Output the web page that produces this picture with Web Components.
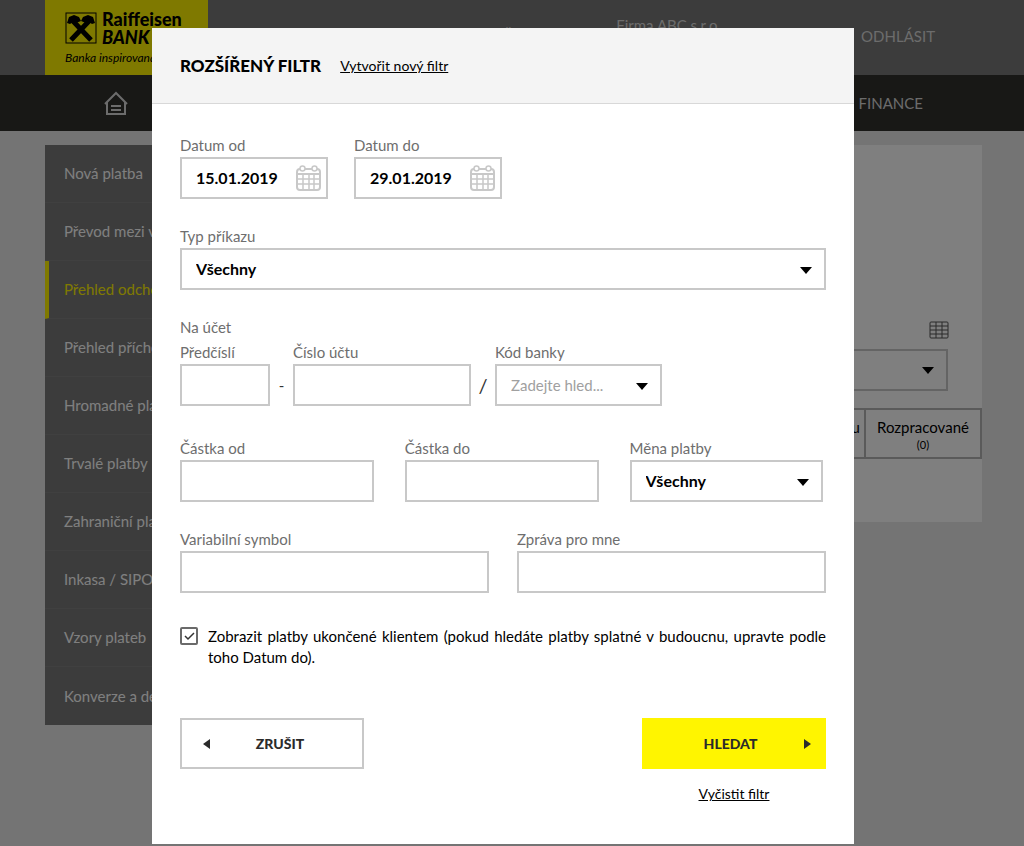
<!DOCTYPE html>
<html lang="cs">
<head>
<meta charset="utf-8">
<meta name="viewport" content="width=device-width, initial-scale=1">
<title>Rozšířený filtr</title>
<style>
  html, body { margin: 0; }
  body { font: 15px/21px Lato, "Liberation Sans", sans-serif; color: #000; background: #e8e8e8; }
</style>
</head>
<body>
<rb-app>
  <rb-page slot="page"></rb-page>
  <rb-dialog slot="dialog" heading="ROZŠÍŘENÝ FILTR">
    <a slot="action" href="#new" style="color:#000;font-size:14px">Vytvořit nový filtr</a>
    <rb-filter-form></rb-filter-form>
  </rb-dialog>
</rb-app>

<script>
const define = (name, html, setup) => customElements.define(name, class extends HTMLElement {
  constructor() {
    super();
    this.attachShadow({ mode: 'open' });
  }
  connectedCallback() {
    if (this.shadowRoot.childNodes.length) return;
    const t = document.createElement('template');
    t.innerHTML = '<style>*{box-sizing:border-box}</style>' + html;
    this.shadowRoot.append(t.content.cloneNode(true));
    if (setup) setup(this, this.shadowRoot);
  }
});

/* Page and overlay share one grid cell */
define('rb-app', `
<style>
  :host { display: grid; grid-template-columns: minmax(0, 1fr); min-height: 100vh; }
  ::slotted(*), .shade { grid-area: 1 / 1; }
  .shade { background: rgba(0,0,0,.5); padding: 28px 18px 2px 0; display: flex; justify-content: center; align-items: flex-start; z-index: 1; }
</style>
<slot name="page"></slot>
<div class="shade"><slot name="dialog"></slot></div>`);

define('rb-logo', `
<style>
  :host { display: block; width: 163px; height: 75px; background: #fff200; padding: 12px 0 0 20px; color: #000; white-space: nowrap; overflow: hidden; }
  .top { display: flex; gap: 5px; height: 32px; }
  svg { width: 32px; height: 32px; flex: none; }
  .name { font-weight: 900; font-size: 18px; line-height: 17px; margin-top: -1px; }
  i { display: block; line-height: 19px; }
  em { display: block; font-size: 12px; line-height: 14px; margin-top: 7px; }
</style>
<div class="top">
  <svg viewBox="0 0 32 32"><rect x="1" y="1" width="30" height="30" fill="none" stroke="#000"/>
    <path d="M6 28 25 8M26 28 7 8" stroke="#000" stroke-width="5"/>
    <path d="M2 11 4 5 9 3 14 5 16 9 11 11 8 10 5 12ZM30 11 28 5 23 3 18 5 16 9 21 11 24 10 27 12Z"/></svg>
  <div class="name">Raiffeisen<i>BANK</i></div>
</div>
<em>Banka inspirovaná</em>`);

define('rb-header', `
<style>
  :host { display: block; color: #fff; font-size: 15px; }
  header { background: #787878; height: 75px; padding: 0 89px 0 45px; display: flex; justify-content: space-between; }
  .user { display: flex; align-items: flex-start; color: #d8d8d8; }
  .lang { margin: 25px 104px 0 0; }
  .firm { margin: 15px 140px 0 0; }
  a { color: inherit; text-decoration: none; }
  .out { margin-top: 26px; }
  nav { background: #30302d; height: 56px; padding: 0 101px 0 103px; display: flex; justify-content: space-between; align-items: center; color: #d8d8d8; }
  nav svg { width: 25px; height: 25px; display: block; }
</style>
<header>
  <rb-logo></rb-logo>
  <div class="user"><span class="lang">Š</span><span class="firm">Firma ABC s.r.o.</span><a class="out" href="#logout">ODHLÁSIT</a></div>
</header>
<nav>
  <a href="#home" aria-label="Domů"><svg viewBox="0 0 25 25" fill="none" stroke="#d8d8d8" stroke-width="2"><path d="M2 13 13 2 24 13M4 11V23H22V11M8 15H18M8 19H18"/></svg></a>
  <a href="#finance">FINANCE</a>
</nav>`);

define('rb-sidebar', `
<style>
  :host { display: block; width: 230px; flex: none; background: #787878; }
  a { display: flex; align-items: center; height: 58px; padding-left: 19px; color: #fff; text-decoration: none; font-size: 15px; white-space: nowrap; border-bottom: 1px solid #818181; }
  a:last-child { border-bottom: 0; }
  a.active { color: #fff200; border-left: 4px solid #fff200; padding-left: 15px; }
</style>
<a href="#1">Nová platba</a>
<a href="#2">Převod mezi v</a>
<a href="#3" class="active">Přehled odcho</a>
<a href="#4">Přehled přícho</a>
<a href="#5">Hromadné pla</a>
<a href="#6">Trvalé platby</a>
<a href="#7">Zahraniční pla</a>
<a href="#8">Inkasa / SIPO</a>
<a href="#9">Vzory plateb</a>
<a href="#10">Konverze a de</a>`);

define('rb-orders', `
<style>
  :host { display: flex; flex-direction: column; flex: 1; background: #fff; height: 377px; padding-top: 175px; align-items: flex-end; }
  .tool { width: 20px; height: 20px; margin-right: 33px; }
  .box { width: 300px; height: 42px; margin: 9px 34px 0 0; border: 2px solid #c8c8c8; display: flex; align-items: center; justify-content: flex-end; padding-right: 12px; }
  .box svg { width: 12px; height: 7px; }
  .tabs { display: flex; margin-top: 17px; border: 2px solid #b4b4b4; height: 51px; text-align: center; }
  .tabs a { color: #000; text-decoration: none; width: 114px; padding-top: 7px; font-size: 15px; line-height: 21px; }
  .tabs a:first-child { text-align: right; padding-right: 4px; border-right: 2px solid #b4b4b4; }
  small { display: block; font-size: 11px; line-height: 13px; }
</style>
<svg class="tool" viewBox="0 0 20 20" fill="none" stroke="#555"><rect x="1" y="2" width="18" height="16" rx="1"/><path d="M1 6H19M1 10H19M1 14H19M7 2V18M13 2V18"/></svg>
<div class="box"><svg viewBox="0 0 12 7"><path d="M0 0H12L6 7Z"/></svg></div>
<div class="tabs"><a href="#sign">K podpisu</a><a href="#draft">Rozpracované<small>(0)</small></a></div>`);

define('rb-page', `
<style>
  :host { display: block; background: #e8e8e8; }
  main { display: flex; align-items: flex-start; gap: 20px; padding: 14px 42px 0 45px; }
</style>
<rb-header></rb-header>
<main><rb-sidebar></rb-sidebar><rb-orders></rb-orders></main>`);

define('rb-dialog', `
<style>
  :host { display: block; width: 100%; max-width: 702px; background: #fff; }
  header { display: flex; align-items: center; gap: 19px; height: 76px; padding: 0 28px; background: #f4f4f4; border-bottom: 1px solid #d8d8d8; }
  h1 { margin: 0; font-size: 17px; line-height: 21px; font-weight: 900; }
  section { padding: 32px 28px 40px; }
</style>
<div role="dialog" aria-modal="true" aria-labelledby="h">
<header><h1 id="h"></h1><slot name="action"></slot></header>
<section><slot></slot></section>
</div>`, (el, root) => {
  root.querySelector('h1').textContent = el.getAttribute('heading');
});

const fieldCss = `
<style>
  :host { display: block; min-width: 0; }
  label { display: block; color: #6e6e6e; line-height: 19px; padding-bottom: 2px; white-space: nowrap; }
  .box { display: grid; align-items: center; }
  input, select { grid-area: 1 / 1; width: 100%; height: 42px; margin: 0; padding: 0 14px 2px; border: 2px solid #c8c8c8; border-radius: 0; background: #fff; color: #000; font: bold 16px/21px Lato, "Liberation Sans", sans-serif; appearance: none; }
  .box svg { grid-area: 1 / 1; justify-self: end; pointer-events: none; }
</style>`;

define('rb-text-field', fieldCss + `
<style>.box svg { width: 25px; height: 26px; margin-right: 7px; }</style>
<label for="f"></label>
<div class="box"><input id="f" type="text"></div>`, (el, root) => {
  root.querySelector('label').textContent = el.getAttribute('label');
  root.querySelector('input').value = el.getAttribute('value') || '';
  if (el.hasAttribute('calendar')) {
    root.querySelector('.box').insertAdjacentHTML('beforeend',
      `<svg viewBox="0 0 25 26" fill="none" stroke="#c8c8c8" stroke-width="2"><path d="M4 4Q1 4 1 7V22Q1 25 4 25H21Q24 25 24 22V7Q24 4 21 4M9 4H16M1 9H24"/><path d="M1 14H24M1 19H24M7 9V25M13 9V25M18 9V25" stroke-width="1.5"/><circle cx="6.500" cy="3.500" r="2.500" stroke-width="1.5"/><circle cx="18.500" cy="3.500" r="2.500" stroke-width="1.5"/></svg>`);
  }
});

define('rb-select-field', fieldCss + `
<style>.box svg { width: 12px; height: 7px; margin: 3px 14px 0 0; } :host([muted]) select { color: #a0a0a0; font-weight: 400; font-size: 15px; padding-bottom: 0; }</style>
<label for="f"></label>
<div class="box"><select id="f"><option></option></select><svg viewBox="0 0 12 7"><path d="M0 0H12L6 7Z"/></svg></div>`, (el, root) => {
  root.querySelector('label').textContent = el.getAttribute('label');
  root.querySelector('option').textContent = el.getAttribute('value');
});

define('rb-checkbox', `
<style>
  :host { display: grid; grid-template-columns: 18px minmax(0, 1fr); column-gap: 10px; }
  .box { display: grid; width: 18px; height: 18px; margin-top: 1px; }
  input { grid-area: 1 / 1; appearance: none; width: 18px; height: 18px; margin: 0; border: 2px solid #6a6a6a; border-radius: 2px; background: #fff; }
  svg { grid-area: 1 / 1; width: 18px; height: 18px; pointer-events: none; visibility: hidden; }
  input:checked + svg { visibility: visible; }
  label { text-align: justify; font-size: 15px; line-height: 21px; }
</style>
<span class="box"><input id="c" type="checkbox" checked><svg viewBox="0 0 18 18" fill="none" stroke="#333" stroke-width="1.5"><path d="M5 9 8 12 14 6"/></svg></span>
<label for="c"></label>`, (el, root) => {
  root.querySelector('label').textContent = el.getAttribute('label');
});

define('rb-button', `
<style>
  :host { display: block; width: 184px; }
  button { display: grid; grid-template-columns: 8px 1fr 8px; align-items: center; width: 100%; height: 51px; padding: 0 5px 0 21px; border: 2px solid #c8c8c8; background: #fff; color: #2b2b2b; font: 900 14px/21px Lato, "Liberation Sans", sans-serif; }
  :host([primary]) button { background: #fff500; border-color: #fff500; padding: 0 12px 0 5px; }
  svg { width: 7px; height: 10px; }
  .next, :host([primary]) .back { visibility: hidden; }
  :host([primary]) .next { visibility: visible; }
</style>
<button type="button"><svg class="back" viewBox="0 0 7 10"><path d="M7 0V10L0 5Z" fill="#2b2b2b"/></svg><slot></slot><svg class="next" viewBox="0 0 7 10"><path d="M0 0V10L7 5Z" fill="#2b2b2b"/></svg></button>`);

define('rb-filter-form', `
<style>
  :host { display: block; }
  form { display: flex; flex-direction: column; gap: 28px; }
  .dates { display: grid; grid-template-columns: 148px 148px; gap: 26px; }
  .account { display: grid; grid-template-columns: 90px 23px 178px 24px 167px; align-items: end; row-gap: 4px; margin-bottom: 5px; }
  .account p { grid-column: 1 / -1; margin: 0; color: #6e6e6e; line-height: 19px; padding-bottom: 2px; }
  .account span { height: 42px; line-height: 42px; text-align: center; color: #333; }
  .account .slash { font-size: 20px; }
  .amounts { display: grid; grid-template-columns: repeat(3, 30%); gap: 31px; }
  .notes { display: grid; grid-template-columns: 1fr 1fr; gap: 28px; }
  rb-checkbox { margin-top: 5px; }
  .actions { display: flex; justify-content: space-between; align-items: flex-start; margin-top: 22px; }
  .submit { display: grid; justify-items: center; gap: 14px; }
  a { color: #000; font-size: 14px; }
</style>
<form>
  <div class="dates">
    <rb-text-field label="Datum od" value="15.01.2019" calendar></rb-text-field>
    <rb-text-field label="Datum do" value="29.01.2019" calendar></rb-text-field>
  </div>
  <rb-select-field label="Typ příkazu" value="Všechny"></rb-select-field>
  <div class="account">
    <p>Na účet</p>
    <rb-text-field label="Předčíslí"></rb-text-field><span>-</span>
    <rb-text-field label="Číslo účtu"></rb-text-field><span class="slash">/</span>
    <rb-select-field label="Kód banky" value="Zadejte hled..." muted></rb-select-field>
  </div>
  <div class="amounts">
    <rb-text-field label="Částka od"></rb-text-field>
    <rb-text-field label="Částka do"></rb-text-field>
    <rb-select-field label="Měna platby" value="Všechny"></rb-select-field>
  </div>
  <div class="notes">
    <rb-text-field label="Variabilní symbol"></rb-text-field>
    <rb-text-field label="Zpráva pro mne"></rb-text-field>
  </div>
  <rb-checkbox label="Zobrazit platby ukončené klientem (pokud hledáte platby splatné v budoucnu, upravte podle toho Datum do)."></rb-checkbox>
  <div class="actions">
    <rb-button>ZRUŠIT</rb-button>
    <div class="submit"><rb-button primary>HLEDAT</rb-button><a href="#clear">Vyčistit filtr</a></div>
  </div>
</form>`);
</script>
</body>
</html>
